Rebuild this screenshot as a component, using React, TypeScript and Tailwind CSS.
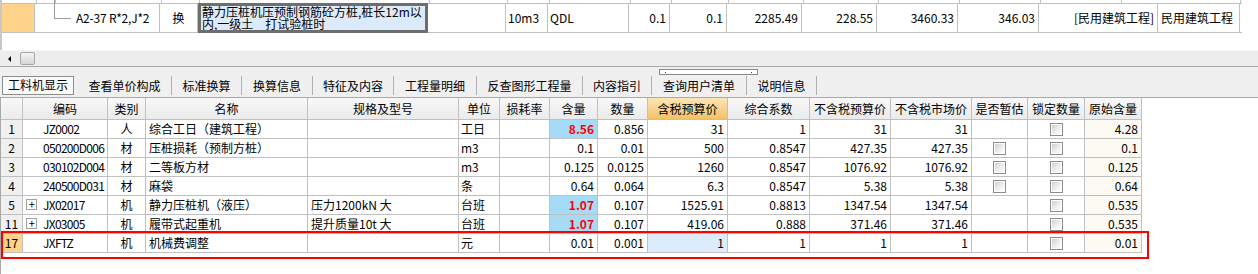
import React from 'react';

// column widths incl. right border
const cols = [
  { w: 'w-[22px]', al: 'justify-center' },
  { w: 'w-[85px]', al: 'justify-start pl-[20px] tracking-[-0.7px]' },
  { w: 'w-[38px]', al: 'justify-center' },
  { w: 'w-[162px]', al: 'justify-start pl-[3px]' },
  { w: 'w-[151px]', al: 'justify-start pl-[3px]' },
  { w: 'w-[41px]', al: 'justify-start pl-[2px]' },
  { w: 'w-[50px]', al: 'justify-end pr-[3px]' },
  { w: 'w-[48px]', al: 'justify-end pr-[3px]' },
  { w: 'w-[50px]', al: 'justify-end pr-[3px]' },
  { w: 'w-[80px]', al: 'justify-end pr-[3px]' },
  { w: 'w-[82px]', al: 'justify-end pr-[3px]' },
  { w: 'w-[81px]', al: 'justify-end pr-[3px]' },
  { w: 'w-[81px]', al: 'justify-end pr-[3px]' },
  { w: 'w-[56px]', al: 'justify-center' },
  { w: 'w-[57px]', al: 'justify-center' },
  { w: 'w-[57px]', al: 'justify-end pr-[3px] bg-[#fdf9f3]' },
];

const headers = [
  '', '编码', '类别', '名称', '规格及型号', '单位', '损耗率', '含量', '数量',
  '含税预算价', '综合系数', '不含税预算价', '不含税市场价', '是否暂估', '锁定数量', '原始含量',
];

interface Row {
  no: string;
  code: string;
  plus?: boolean;
  type: string;
  name: string;
  spec: string;
  unit: string;
  qty: string;
  hot?: boolean;
  num: string;
  price: string;
  sel?: boolean;
  coef: string;
  notax: string;
  market: string;
  est: boolean;
  orig: string;
  current?: boolean;
}

const rows: Row[] = [
  { no: '1', code: 'JZ0002', type: '人', name: '综合工日（建筑工程）', spec: '', unit: '工日', qty: '8.56', hot: true, num: '0.856', price: '31', coef: '1', notax: '31', market: '31', est: false, orig: '4.28' },
  { no: '2', code: '050200D006', type: '材', name: '压桩损耗（预制方桩）', spec: '', unit: 'm3', qty: '0.1', num: '0.01', price: '500', coef: '0.8547', notax: '427.35', market: '427.35', est: true, orig: '0.1' },
  { no: '3', code: '030102D004', type: '材', name: '二等板方材', spec: '', unit: 'm3', qty: '0.125', num: '0.0125', price: '1260', coef: '0.8547', notax: '1076.92', market: '1076.92', est: true, orig: '0.125' },
  { no: '4', code: '240500D031', type: '材', name: '麻袋', spec: '', unit: '条', qty: '0.64', num: '0.064', price: '6.3', coef: '0.8547', notax: '5.38', market: '5.38', est: true, orig: '0.64' },
  { no: '5', code: 'JX02017', plus: true, type: '机', name: '静力压桩机（液压）', spec: '压力1200kN 大', unit: '台班', qty: '1.07', hot: true, num: '0.107', price: '1525.91', coef: '0.8813', notax: '1347.54', market: '1347.54', est: false, orig: '0.535' },
  { no: '11', code: 'JX03005', plus: true, type: '机', name: '履带式起重机', spec: '提升质量10t 大', unit: '台班', qty: '1.07', hot: true, num: '0.107', price: '419.06', coef: '0.888', notax: '371.46', market: '371.46', est: false, orig: '0.535' },
  { no: '17', code: 'JXFTZ', type: '机', name: '机械费调整', spec: '', unit: '元', qty: '0.01', num: '0.001', price: '1', sel: true, coef: '1', notax: '1', market: '1', est: false, orig: '0.01', current: true },
];

const tabs: [string, string][] = [
  ['工料机显示', 'w-[78px]'],
  ['查看单价构成', 'w-[94px]'],
  ['标准换算', 'w-[70px]'],
  ['换算信息', 'w-[71px]'],
  ['特征及内容', 'w-[81px]'],
  ['工程量明细', 'w-[83px]'],
  ['反查图形工程量', 'w-[106px]'],
  ['内容指引', 'w-[69px]'],
  ['查询用户清单', 'w-[95px]'],
  ['说明信息', 'w-[70px]'],
];

const CheckBox = () => (
  <span className="inline-block w-[13px] h-[13px] border border-[#8c8c8c] p-px bg-white">
    <span className="block w-full h-full bg-linear-to-br from-[#cfcfcf] via-[#ececec] to-white" />
  </span>
);

const Cell: React.FC<{ i: number; className?: string; children?: React.ReactNode }> = ({ i, className = '', children }) => (
  <div className={`flex items-center shrink-0 h-full border-r border-b border-[#c0c0c0] whitespace-nowrap overflow-hidden ${cols[i].w} ${cols[i].al} ${className}`}>
    {children}
  </div>
);

const DataRow: React.FC<{ r: Row }> = ({ r }) => (
  <div className="flex h-[19px]">
    <Cell i={0} className={r.current ? 'bg-[#ffd38a]' : 'bg-[#f0f0f0]'}>{r.no}</Cell>
    <Cell i={1} className="relative">
      {r.plus && (
        <span className="absolute left-[3px] top-[3px] w-[11px] h-[11px] border border-[#a0a0a0] bg-white flex items-center justify-center text-[11px] leading-[9px]">+</span>
      )}
      {r.code}
    </Cell>
    <Cell i={2}>{r.type}</Cell>
    <Cell i={3}>{r.name}</Cell>
    <Cell i={4}>{r.spec}</Cell>
    <Cell i={5}>{r.unit}</Cell>
    <Cell i={6} />
    <Cell i={7} className={r.hot ? 'bg-[#a5dbf7] text-[#ff0000] font-bold' : ''}>{r.qty}</Cell>
    <Cell i={8}>{r.num}</Cell>
    <Cell i={9} className={r.sel ? 'bg-[#dcecfc]' : ''}>{r.price}</Cell>
    <Cell i={10}>{r.coef}</Cell>
    <Cell i={11}>{r.notax}</Cell>
    <Cell i={12}>{r.market}</Cell>
    <Cell i={13}>{r.est && <CheckBox />}</Cell>
    <Cell i={14}><CheckBox /></Cell>
    <Cell i={15}>{r.orig}</Cell>
  </div>
);

const topStrip = [
  'w-[35px]', 'w-[19px]', 'w-[106px]', 'w-[38px]', 'w-[230px]', 'w-[78px]', 'w-[42px]', 'w-[81px]',
  'w-[41px]', 'w-[57px]', 'w-[75px]', 'w-[75px]', 'w-[81px]', 'w-[81px]', 'w-[81px]', 'w-[119px]', 'w-[82px]',
];

export default function App() {
  return (
    <div className="relative w-[1258px] h-[274px] bg-white overflow-hidden text-[12px] leading-[12px] text-black font-['Noto_Sans_CJK_SC',sans-serif]">
      {/* upper grid (partial) */}
      <div className="h-[50px] border-l-2 border-[#c8c8c8]">
        <div className="flex h-[3px]">
          {topStrip.map((w, i) => (
            <div key={i} className={`shrink-0 h-full border-r border-[#c0c0c0] ${w}`} />
          ))}
        </div>
        <div className="flex h-[30px] border-y border-[#c0c0c0] w-[1240px]">
          <div className="w-[33px] shrink-0 bg-[#ffd38a] border-r border-[#c0c0c0]" />
          <div className="relative w-[125px] shrink-0 border-r border-[#c0c0c0] flex items-center">
            <span className="absolute left-[19px] top-[-4px] h-[19px] w-[17px] border-l border-b border-[#9a9a9a]" />
            <span className="pl-[41px] tracking-[-0.2px]">A2-37 R*2,J*2</span>
          </div>
          <div className="w-[38px] shrink-0 border-r border-[#c0c0c0] flex items-center justify-center">换</div>
          <div className="w-[230px] shrink-0 -my-px h-[30px] border-[3px] border-[#6e6e6e] bg-[#dcebfc] pl-[1px] leading-[12px] overflow-hidden">
            <div>静力压桩机压预制钢筋砼方桩,桩长12m以</div>
            <div>内,一级土　打试验桩时</div>
          </div>
          <div className="w-[78px] shrink-0 border-r border-[#c0c0c0]" />
          <div className="w-[42px] shrink-0 border-r border-[#c0c0c0] flex items-center pl-[2px]">10m3</div>
          <div className="w-[81px] shrink-0 border-r border-[#c0c0c0] flex items-center pl-[2px]">QDL</div>
          <div className="w-[41px] shrink-0 border-r border-[#c0c0c0] flex items-center justify-end pr-[3px]">0.1</div>
          <div className="w-[57px] shrink-0 border-r border-[#c0c0c0] flex items-center justify-end pr-[3px]">0.1</div>
          <div className="w-[75px] shrink-0 border-r border-[#c0c0c0] flex items-center justify-end pr-[3px]">2285.49</div>
          <div className="w-[75px] shrink-0 border-r border-[#c0c0c0] flex items-center justify-end pr-[3px]">228.55</div>
          <div className="w-[81px] shrink-0 border-r border-[#c0c0c0] flex items-center justify-end pr-[3px]">3460.33</div>
          <div className="w-[81px] shrink-0 border-r border-[#c0c0c0] flex items-center justify-end pr-[3px]">346.03</div>
          <div className="w-[119px] shrink-0 border-r border-[#c0c0c0] flex items-center justify-end pr-[3px]">[民用建筑工程]</div>
          <div className="w-[82px] shrink-0 border-r border-[#c0c0c0] flex items-center pl-[3px]">民用建筑工程</div>
        </div>
      </div>

      {/* horizontal scrollbar */}
      <div className="flex items-center h-[16px] bg-[#ededed] border-t border-[#f6f6f6]">
        <span className="ml-[8px] w-0 h-0 border-y-[3px] border-y-transparent border-r-[3px] border-r-black" />
        <span className="ml-[9px] w-[15px] h-[13px] rounded-[2px] border border-[#a8a8a8] bg-linear-to-b from-[#f4f4f4] to-[#d6d6d6]" />
      </div>

      {/* tabs */}
      <div className="relative h-[32px] bg-[#f0f0f0] border-y border-[#a9a9a9] pt-[9px]">
        <div className="absolute left-[659px] top-[2px] w-[99px] h-[6px] border border-[#8a8a8a] bg-white flex items-center justify-between px-[5px]">
          <span className="w-px h-px bg-[#2040a0]" />
          <span className="w-px h-px bg-[#2040a0]" />
        </div>
        <div className="flex h-[19px]">
          {tabs.map(([t, w], i) => (
            <div key={t} className={`shrink-0 flex items-center justify-center ${w} ${i === 0 ? '' : 'border-r border-[#b0b0b0]'}`}>
              {i === 0 ? (
                <div className="ml-[2px] mr-[4px] flex-1 h-[19px] -mt-px border border-[#8e8e8e] bg-[#fafafa] flex items-center justify-center">{t}</div>
              ) : (
                t
              )}
            </div>
          ))}
        </div>
      </div>

      {/* detail grid */}
      <div className="border-l border-[#a9a9a9] h-[176px]">
        <div className="flex h-[22px]">
          {headers.map((h, i) => (
            <div
              key={i}
              className={`flex items-center justify-center shrink-0 h-full border-r border-b border-[#c0c0c0] ${cols[i].w} ${
                i === 9 ? 'bg-linear-to-b from-[#fce6b6] to-[#f2c165]' : 'bg-linear-to-b from-[#f8f8f8] to-[#ebebeb]'
              }`}
            >
              {h}
            </div>
          ))}
        </div>
        {rows.map((r) => (
          <DataRow key={r.no} r={r} />
        ))}
      </div>

      {/* red annotation box */}
      <div className="absolute left-[1px] top-[231px] w-[1148px] h-[28px] border-2 border-[#ff0000]" />
    </div>
  );
}
